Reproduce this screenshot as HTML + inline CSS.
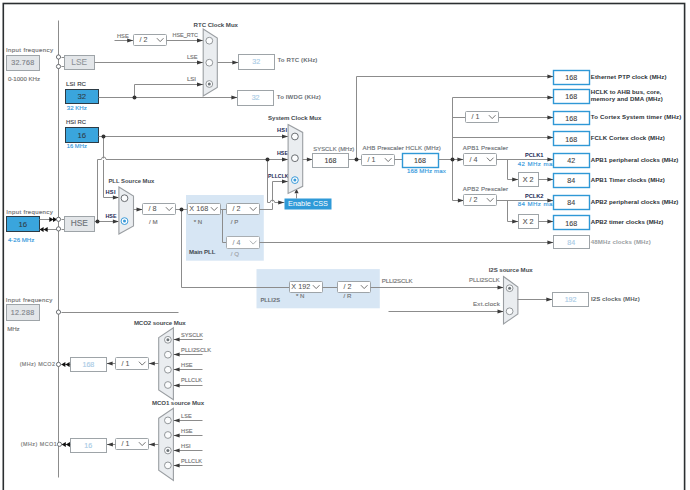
<!DOCTYPE html><html><head><meta charset="utf-8"><style>html,body{margin:0;padding:0;background:#fff;overflow:hidden}svg{display:block}text{font-family:"Liberation Sans",sans-serif}</style></head><body>
<svg width="690" height="490" viewBox="0 0 690 490">
<rect x="0" y="0" width="690" height="490" fill="#fff"/>
<rect x="186" y="195" width="77.8" height="65.7" fill="#d7e6f4"/>
<rect x="256.5" y="269.1" width="123.3" height="39.2" fill="#d7e6f4"/>
<polyline points="58.5,20.5 58.5,477.5" fill="none" stroke="#8c8c8c" stroke-width="1.0"/>
<text x="6" y="52.45" font-size="6.1" fill="#727272" stroke="#727272" stroke-width="0.15" textLength="47" lengthAdjust="spacing">Input frequency</text>
<rect x="6.5" y="55.5" width="33.00" height="15.00" fill="#e3e6e9" stroke="#9ea4a8" stroke-width="1.0"/>
<text x="22.7" y="65.27" font-size="7.1" fill="#7f8489" stroke="#7f8489" stroke-width="0.15" text-anchor="middle" textLength="23" lengthAdjust="spacing">32.768</text>
<text x="8" y="80.95" font-size="6.1" fill="#727272" stroke="#727272" stroke-width="0.15" textLength="32" lengthAdjust="spacing">0-1000 KHz</text>
<polyline points="61.5,57.5 64.5,57.5" fill="none" stroke="#8c8c8c" stroke-width="1.0"/>
<polyline points="61.5,66.5 64.5,66.5" fill="none" stroke="#8c8c8c" stroke-width="1.0"/>
<circle cx="58.5" cy="57" r="2.1" fill="#fff" stroke="#5d6165" stroke-width="0.9"/>
<circle cx="58.5" cy="66.5" r="2.1" fill="#fff" stroke="#5d6165" stroke-width="0.9"/>
<rect x="64.5" y="55.5" width="30.00" height="14.00" fill="#e3e6e9" stroke="#9ea4a8" stroke-width="1.0"/>
<text x="79.2" y="64.89" font-size="8.4" fill="#8c9196" stroke="#8c9196" stroke-width="0.05" text-anchor="middle">LSE</text>
<polyline points="94.5,62.5 203.5,62.5" fill="none" stroke="#8c8c8c" stroke-width="1.0"/>
<polygon points="203.00,62.50 197.00,60.40 197.00,64.60" fill="#3a3a3a"/>
<text x="187" y="58.95" font-size="6.1" fill="#727272" stroke="#727272" stroke-width="0.15" textLength="10.6" lengthAdjust="spacingAndGlyphs">LSE</text>
<text x="117" y="37.95" font-size="6.1" fill="#727272" stroke="#727272" stroke-width="0.15" textLength="11.7" lengthAdjust="spacingAndGlyphs">HSE</text>
<polyline points="114.5,40.5 133.5,40.5" fill="none" stroke="#8c8c8c" stroke-width="1.0"/>
<polygon points="133.20,40.50 127.20,38.40 127.20,42.60" fill="#3a3a3a"/>
<rect x="133.5" y="34.5" width="33.00" height="11.00" rx="1" fill="#fff" stroke="#9ea4a8" stroke-width="1"/>
<text x="139.5" y="42.30" font-size="7.2" fill="#555" stroke="#555" stroke-width="0.05">/ 2</text>
<polyline points="156.90,38.20 160.20,41.60 163.50,38.20" fill="none" stroke="#666" stroke-width="0.9"/>
<text x="172.5" y="37.35" font-size="6.1" fill="#727272" stroke="#727272" stroke-width="0.15" textLength="25.5" lengthAdjust="spacingAndGlyphs">HSE_RTC</text>
<polyline points="166.5,40.5 203.5,40.5" fill="none" stroke="#8c8c8c" stroke-width="1.0"/>
<polygon points="203.00,40.50 197.00,38.40 197.00,42.60" fill="#3a3a3a"/>
<text x="193.6" y="26.55" font-size="6.1" fill="#464b50" font-weight="bold" textLength="44.4" lengthAdjust="spacing">RTC Clock Mux</text>
<polygon points="203.2,29 217.3,38 217.3,87.4 203.2,96" fill="#eaedf0" stroke="#9a9ea2" stroke-width="1.1"/>
<circle cx="209.3" cy="40.7" r="3.4" fill="#fbfcfd" stroke="#8d9195" stroke-width="0.95"/>
<circle cx="209.3" cy="62.7" r="3.4" fill="#fbfcfd" stroke="#8d9195" stroke-width="0.95"/>
<circle cx="209.3" cy="84" r="3.4" fill="#fbfcfd" stroke="#8d9195" stroke-width="0.95"/>
<circle cx="209.3" cy="84" r="1.5" fill="#6d7478"/>
<polyline points="217.5,62.5 238.5,62.5" fill="none" stroke="#8c8c8c" stroke-width="1.0"/>
<polygon points="238.30,62.50 232.30,60.40 232.30,64.60" fill="#3a3a3a"/>
<rect x="238.5" y="54.5" width="36.00" height="15.00" fill="#fff" stroke="#9ea4a8" stroke-width="1.0"/>
<text x="256.3" y="64.47" font-size="7.1" fill="#a9cbe6" stroke="#a9cbe6" stroke-width="0.15" text-anchor="middle">32</text>
<text x="277.4" y="62.25" font-size="6.1" fill="#6b7075" font-weight="bold" textLength="40" lengthAdjust="spacing">To RTC (KHz)</text>
<text x="66" y="85.55" font-size="6.1" fill="#3c4147" stroke="#3c4147" stroke-width="0.15" textLength="20" lengthAdjust="spacing">LSI RC</text>
<rect x="65.5" y="89.5" width="33.00" height="14.00" fill="#3aa5dd" stroke="#2c3b45" stroke-width="1"/>
<text x="81.8" y="99.00" font-size="7.8" fill="#2f3c47" stroke="#2f3c47" stroke-width="0.08" text-anchor="middle">32</text>
<text x="66.8" y="110.15" font-size="6.1" fill="#3399dd" stroke="#3399dd" stroke-width="0.15" textLength="20" lengthAdjust="spacing">32 KHz</text>
<polyline points="98.5,97.5 237.5,97.5" fill="none" stroke="#8c8c8c" stroke-width="1.0"/>
<polygon points="237.40,97.50 231.40,95.40 231.40,99.60" fill="#3a3a3a"/>
<polyline points="134.5,97.5 134.5,84.5 203.5,84.5" fill="none" stroke="#8c8c8c" stroke-width="1.0"/>
<polygon points="203.00,84.50 197.00,82.40 197.00,86.60" fill="#3a3a3a"/>
<text x="187" y="80.95" font-size="6.1" fill="#727272" stroke="#727272" stroke-width="0.15" textLength="9" lengthAdjust="spacing">LSI</text>
<rect x="237.5" y="90.5" width="36.00" height="15.00" fill="#fff" stroke="#9ea4a8" stroke-width="1.0"/>
<text x="255.6" y="100.27" font-size="7.1" fill="#a9cbe6" stroke="#a9cbe6" stroke-width="0.15" text-anchor="middle">32</text>
<text x="276.8" y="99.15" font-size="6.1" fill="#6b7075" font-weight="bold" textLength="44" lengthAdjust="spacing">To IWDG (KHz)</text>
<text x="66" y="123.55" font-size="6.1" fill="#3c4147" stroke="#3c4147" stroke-width="0.15" textLength="20" lengthAdjust="spacingAndGlyphs">HSI RC</text>
<rect x="65.5" y="127.5" width="33.00" height="15.00" fill="#3aa5dd" stroke="#2c3b45" stroke-width="1"/>
<text x="81.8" y="137.50" font-size="7.8" fill="#2f3c47" stroke="#2f3c47" stroke-width="0.08" text-anchor="middle">16</text>
<text x="66.8" y="148.15" font-size="6.1" fill="#3399dd" stroke="#3399dd" stroke-width="0.15" textLength="20" lengthAdjust="spacingAndGlyphs">16 MHz</text>
<polyline points="98.5,136.5 288.5,136.5" fill="none" stroke="#8c8c8c" stroke-width="1.0"/>
<polygon points="288.00,136.50 282.00,134.40 282.00,138.60" fill="#3a3a3a"/>
<polyline points="103.5,136.5 103.5,197.5 118.5,197.5" fill="none" stroke="#8c8c8c" stroke-width="1.0"/>
<polygon points="118.90,197.50 112.90,195.40 112.90,199.60" fill="#3a3a3a"/>
<text x="6.3" y="213.65" font-size="6.1" fill="#727272" stroke="#727272" stroke-width="0.15" textLength="46.4" lengthAdjust="spacing">Input frequency</text>
<rect x="6.5" y="216.5" width="33.00" height="15.00" fill="#3aa5dd" stroke="#2c3b45" stroke-width="1.0"/>
<text x="22.8" y="226.80" font-size="7.8" fill="#2f3c47" stroke="#2f3c47" stroke-width="0.08" text-anchor="middle">16</text>
<text x="7.9" y="242.35" font-size="6.1" fill="#3399dd" stroke="#3399dd" stroke-width="0.15" textLength="26.4" lengthAdjust="spacing">4-26 MHz</text>
<polyline points="39.5,219.5 56.5,219.5" fill="none" stroke="#8c8c8c" stroke-width="1.0"/>
<polygon points="57.20,219.50 53.00,216.90 53.00,222.10" fill="#111"/>
<polygon points="53.50,219.50 49.30,216.90 49.30,222.10" fill="#111"/>
<polyline points="39.5,229.5 56.5,229.5" fill="none" stroke="#8c8c8c" stroke-width="1.0"/>
<polygon points="39.40,229.50 43.60,226.90 43.60,232.10" fill="#111"/>
<polygon points="43.50,229.50 47.70,226.90 47.70,232.10" fill="#111"/>
<polyline points="61.5,219.5 64.5,219.5" fill="none" stroke="#8c8c8c" stroke-width="1.0"/>
<polyline points="61.5,229.5 64.5,229.5" fill="none" stroke="#8c8c8c" stroke-width="1.0"/>
<circle cx="58.5" cy="219.3" r="2.1" fill="#fff" stroke="#5d6165" stroke-width="0.9"/>
<circle cx="58.5" cy="228.9" r="2.1" fill="#fff" stroke="#5d6165" stroke-width="0.9"/>
<rect x="64.5" y="216.5" width="30.00" height="15.00" fill="#e3e6e9" stroke="#9ea4a8" stroke-width="1.0"/>
<text x="79.3" y="226.49" font-size="8.4" fill="#6a6f74" stroke="#6a6f74" stroke-width="0.1" text-anchor="middle">HSE</text>
<polyline points="94.5,221.5 118.5,221.5" fill="none" stroke="#8c8c8c" stroke-width="1.0"/>
<polygon points="118.90,221.50 112.90,219.40 112.90,223.60" fill="#3a3a3a"/>
<polyline points="97.5,221.5 97.5,159.5 288.5,159.5" fill="none" stroke="#8c8c8c" stroke-width="1.0"/>
<polygon points="288.00,159.50 282.00,157.40 282.00,161.60" fill="#3a3a3a"/>
<rect x="101.5" y="158.39999999999998" width="4.4" height="1.6" fill="#fff"/>
<path d="M101.5,159.2 A2.2,2.2 0 0 1 105.9,159.2" fill="none" stroke="#8c8c8c" stroke-width="1"/>
<text x="108.4" y="182.95" font-size="6.1" fill="#464b50" font-weight="bold" textLength="46" lengthAdjust="spacingAndGlyphs">PLL Source Mux</text>
<text x="105.5" y="193.62" font-size="5.7" fill="#1d2a55" font-weight="bold" textLength="10" lengthAdjust="spacing">HSI</text>
<text x="105.5" y="217.72" font-size="5.7" fill="#1d2a55" font-weight="bold" textLength="11" lengthAdjust="spacingAndGlyphs">HSE</text>
<polygon points="118.9,187 133.5,196 133.5,226 118.9,234" fill="#eaedf0" stroke="#9a9ea2" stroke-width="1.1"/>
<circle cx="124.5" cy="198.2" r="3.4" fill="#fbfcfd" stroke="#62666a" stroke-width="0.95"/>
<circle cx="124.5" cy="221.1" r="3.4" fill="#fff" stroke="#3a9ad9" stroke-width="1"/>
<circle cx="124.5" cy="221.1" r="1.5" fill="#3a9ad9"/>
<polyline points="133.5,209.5 142.5,209.5" fill="none" stroke="#8c8c8c" stroke-width="1.0"/>
<polygon points="142.50,209.50 136.50,207.40 136.50,211.60" fill="#3a3a3a"/>
<rect x="142.5" y="203.5" width="33.00" height="11.00" rx="1" fill="#fff" stroke="#9ea4a8" stroke-width="1"/>
<text x="148.5" y="211.30" font-size="7.2" fill="#555" stroke="#555" stroke-width="0.05">/ 8</text>
<polyline points="165.90,207.20 169.20,210.60 172.50,207.20" fill="none" stroke="#666" stroke-width="0.9"/>
<text x="149" y="223.65" font-size="6.1" fill="#727272" stroke="#727272" stroke-width="0.15">/ M</text>
<polyline points="175.5,209.5 187.5,209.5" fill="none" stroke="#8c8c8c" stroke-width="1.0"/>
<polyline points="181.5,209.5 181.5,287.5 289.5,287.5" fill="none" stroke="#8c8c8c" stroke-width="1.0"/>
<rect x="187.5" y="203.5" width="33.00" height="11.00" rx="1" fill="#fff" stroke="#9ea4a8" stroke-width="1"/>
<text x="189.3" y="211.30" font-size="7.2" fill="#555" stroke="#555" stroke-width="0.05" textLength="19" lengthAdjust="spacing">X 168</text>
<polyline points="210.90,207.20 214.20,210.60 217.50,207.20" fill="none" stroke="#666" stroke-width="0.9"/>
<text x="193.7" y="223.65" font-size="6.1" fill="#727272" stroke="#727272" stroke-width="0.15">* N</text>
<polyline points="220.5,209.5 226.5,209.5" fill="none" stroke="#8c8c8c" stroke-width="1.0"/>
<polyline points="222.5,209.5 222.5,242.5 226.5,242.5" fill="none" stroke="#8c8c8c" stroke-width="1.0"/>
<rect x="226.5" y="203.5" width="33.00" height="11.00" rx="1" fill="#fff" stroke="#9ea4a8" stroke-width="1"/>
<text x="232.5" y="211.30" font-size="7.2" fill="#555" stroke="#555" stroke-width="0.05">/ 2</text>
<polyline points="249.90,207.20 253.20,210.60 256.50,207.20" fill="none" stroke="#666" stroke-width="0.9"/>
<text x="230.8" y="223.65" font-size="6.1" fill="#727272" stroke="#727272" stroke-width="0.15">/ P</text>
<rect x="226.5" y="236.5" width="33.00" height="12.00" rx="1" fill="#fff" stroke="#a9aeb2" stroke-width="1"/>
<text x="232.5" y="244.80" font-size="7.2" fill="#858a8f" stroke="#858a8f" stroke-width="0.05">/ 4</text>
<polyline points="249.90,240.70 253.20,244.10 256.50,240.70" fill="none" stroke="#a4a8ac" stroke-width="0.9"/>
<text x="230.8" y="255.65" font-size="6.1" fill="#a0a4a8" stroke="#a0a4a8" stroke-width="0.15">/ Q</text>
<text x="188.9" y="253.85" font-size="6.1" fill="#444a50" font-weight="bold" textLength="26.6" lengthAdjust="spacing">Main PLL</text>
<polyline points="259.5,242.5 553.5,242.5" fill="none" stroke="#8c8c8c" stroke-width="1.0"/>
<polygon points="553.40,242.50 547.40,240.40 547.40,244.60" fill="#3a3a3a"/>
<polyline points="259.5,209.5 272.5,209.5 272.5,181.5 288.5,181.5" fill="none" stroke="#8c8c8c" stroke-width="1.0"/>
<polygon points="288.00,181.50 282.00,179.40 282.00,183.60" fill="#3a3a3a"/>
<text x="268" y="177.52" font-size="5.7" fill="#1d2a55" font-weight="bold" textLength="20.6" lengthAdjust="spacingAndGlyphs">PLLCLK</text>
<polyline points="267.5,159.5 267.5,202.5 284.5,202.5" fill="none" stroke="#8c8c8c" stroke-width="1.0"/>
<polygon points="284.20,202.50 278.20,200.40 278.20,204.60" fill="#3a3a3a"/>
<rect x="270.2" y="201.5" width="4.4" height="1.6" fill="#fff"/>
<path d="M270.2,202.3 A2.2,2.2 0 0 1 274.59999999999997,202.3" fill="none" stroke="#8c8c8c" stroke-width="1"/>
<rect x="284.5" y="198.5" width="47.00" height="11.00" fill="#2f9ad8" stroke="none" stroke-width="0"/>
<text x="308" y="206.40" font-size="7.8" fill="#fff" text-anchor="middle" textLength="39.9" lengthAdjust="spacingAndGlyphs">Enable CSS</text>
<polyline points="296.5,198.5 296.5,193.5" fill="none" stroke="#8c8c8c" stroke-width="1.0"/>
<polygon points="296.50,188.80 294.40,193.30 298.60,193.30" fill="#3a3a3a"/>
<text x="268" y="120.45" font-size="6.1" fill="#464b50" font-weight="bold" textLength="53.3" lengthAdjust="spacing">System Clock Mux</text>
<text x="277" y="132.02" font-size="5.7" fill="#1d2a55" font-weight="bold" textLength="10" lengthAdjust="spacing">HSI</text>
<text x="277" y="154.82" font-size="5.7" fill="#1d2a55" font-weight="bold" textLength="11" lengthAdjust="spacingAndGlyphs">HSE</text>
<polygon points="288.1,124.6 302.7,132.4 302.7,186.3 288.1,193.4" fill="#eaedf0" stroke="#9a9ea2" stroke-width="1.1"/>
<circle cx="294.9" cy="136.5" r="3.4" fill="#fbfcfd" stroke="#62666a" stroke-width="0.95"/>
<circle cx="294.9" cy="158.2" r="3.4" fill="#fbfcfd" stroke="#62666a" stroke-width="0.95"/>
<circle cx="294.9" cy="180.1" r="3.4" fill="#fff" stroke="#3a9ad9" stroke-width="1"/>
<circle cx="294.9" cy="180.1" r="1.5" fill="#3a9ad9"/>
<polyline points="302.5,159.5 312.5,159.5" fill="none" stroke="#8c8c8c" stroke-width="1.0"/>
<polygon points="312.40,159.50 306.90,157.50 306.90,161.50" fill="#3a3a3a"/>
<rect x="312.5" y="153.5" width="36.00" height="14.00" fill="#fff" stroke="#9ea4a8" stroke-width="1.0"/>
<text x="330.5" y="162.77" font-size="7.1" fill="#3e3e3e" stroke="#3e3e3e" stroke-width="0.1" text-anchor="middle">168</text>
<text x="313.3" y="150.55" font-size="6.1" fill="#6d7277" stroke="#6d7277" stroke-width="0.15" textLength="41" lengthAdjust="spacingAndGlyphs">SYSCLK (MHz)</text>
<polyline points="348.5,159.5 361.5,159.5" fill="none" stroke="#8c8c8c" stroke-width="1.0"/>
<polyline points="356.5,159.5 356.5,76.5 553.5,76.5" fill="none" stroke="#8c8c8c" stroke-width="1.0"/>
<polygon points="553.40,76.50 547.40,74.40 547.40,78.60" fill="#3a3a3a"/>
<text x="362.6" y="149.95" font-size="6.1" fill="#6d7277" stroke="#6d7277" stroke-width="0.15" textLength="78.3" lengthAdjust="spacing">AHB Prescaler HCLK (MHz)</text>
<rect x="361.5" y="154.5" width="33.00" height="11.00" rx="1" fill="#fff" stroke="#9ea4a8" stroke-width="1"/>
<text x="367.5" y="162.30" font-size="7.2" fill="#555" stroke="#555" stroke-width="0.05">/ 1</text>
<polyline points="384.90,158.20 388.20,161.60 391.50,158.20" fill="none" stroke="#666" stroke-width="0.9"/>
<polyline points="394.5,159.5 402.5,159.5" fill="none" stroke="#8c8c8c" stroke-width="1.0"/>
<rect x="402.5" y="153.5" width="36.00" height="14.00" fill="#fff" stroke="#2f98d6" stroke-width="1.4"/>
<text x="420" y="162.57" font-size="7.1" fill="#3e3e3e" stroke="#3e3e3e" stroke-width="0.1" text-anchor="middle">168</text>
<text x="407" y="172.55" font-size="6.1" fill="#3399dd" stroke="#3399dd" stroke-width="0.15" textLength="38.7" lengthAdjust="spacing">168 MHz max</text>
<polyline points="438.5,159.5 463.5,159.5" fill="none" stroke="#8c8c8c" stroke-width="1.0"/>
<polygon points="463.40,159.50 457.40,157.40 457.40,161.60" fill="#3a3a3a"/>
<polyline points="452.5,97.5 452.5,200.5 463.5,200.5" fill="none" stroke="#8c8c8c" stroke-width="1.0"/>
<polygon points="463.90,200.50 457.90,198.40 457.90,202.60" fill="#3a3a3a"/>
<polyline points="452.5,97.5 553.5,97.5" fill="none" stroke="#8c8c8c" stroke-width="1.0"/>
<polygon points="553.40,97.50 547.40,95.40 547.40,99.60" fill="#3a3a3a"/>
<polyline points="452.5,117.5 553.5,117.5" fill="none" stroke="#8c8c8c" stroke-width="1.0"/>
<polygon points="553.40,117.50 547.40,115.40 547.40,119.60" fill="#3a3a3a"/>
<rect x="465.5" y="111.5" width="33.00" height="11.00" rx="1" fill="#fff" stroke="#9ea4a8" stroke-width="1"/>
<text x="471.5" y="119.30" font-size="7.2" fill="#555" stroke="#555" stroke-width="0.05">/ 1</text>
<polyline points="488.90,115.20 492.20,118.60 495.50,115.20" fill="none" stroke="#666" stroke-width="0.9"/>
<polyline points="452.5,137.5 553.5,137.5" fill="none" stroke="#8c8c8c" stroke-width="1.0"/>
<polygon points="553.40,137.50 547.40,135.40 547.40,139.60" fill="#3a3a3a"/>
<text x="462.8" y="149.95" font-size="6.1" fill="#6d7277" stroke="#6d7277" stroke-width="0.15" textLength="45.2" lengthAdjust="spacing">APB1 Prescaler</text>
<rect x="463.5" y="153.5" width="33.00" height="12.00" rx="1" fill="#fff" stroke="#9ea4a8" stroke-width="1"/>
<text x="469.5" y="161.80" font-size="7.2" fill="#555" stroke="#555" stroke-width="0.05">/ 4</text>
<polyline points="486.90,157.70 490.20,161.10 493.50,157.70" fill="none" stroke="#666" stroke-width="0.9"/>
<polyline points="496.5,159.5 553.5,159.5" fill="none" stroke="#8c8c8c" stroke-width="1.0"/>
<polygon points="553.40,159.50 547.40,157.40 547.40,161.60" fill="#3a3a3a"/>
<polyline points="507.5,159.5 507.5,179.5 518.5,179.5" fill="none" stroke="#8c8c8c" stroke-width="1.0"/>
<polygon points="518.20,179.50 512.20,177.40 512.20,181.60" fill="#3a3a3a"/>
<text x="525" y="156.62" font-size="5.7" fill="#1d2a55" font-weight="bold" textLength="18.5" lengthAdjust="spacing">PCLK1</text>
<text x="517.8" y="166.05" font-size="6.1" fill="#3399dd" stroke="#3399dd" stroke-width="0.15" textLength="38" lengthAdjust="spacing">42 MHz max</text>
<rect x="518.5" y="172.5" width="20.00" height="14.00" fill="#fff" stroke="#9ea4a8" stroke-width="1.0"/>
<text x="528.1" y="181.80" font-size="7.2" fill="#555" stroke="#555" stroke-width="0.15" text-anchor="middle" textLength="10.7" lengthAdjust="spacing">X 2</text>
<polyline points="538.5,179.5 553.5,179.5" fill="none" stroke="#8c8c8c" stroke-width="1.0"/>
<polygon points="553.40,179.50 547.40,177.40 547.40,181.60" fill="#3a3a3a"/>
<text x="462.8" y="191.15" font-size="6.1" fill="#6d7277" stroke="#6d7277" stroke-width="0.15" textLength="45.2" lengthAdjust="spacing">APB2 Prescaler</text>
<rect x="463.5" y="194.5" width="33.00" height="11.00" rx="1" fill="#fff" stroke="#9ea4a8" stroke-width="1"/>
<text x="469.5" y="202.30" font-size="7.2" fill="#555" stroke="#555" stroke-width="0.05">/ 2</text>
<polyline points="486.90,198.20 490.20,201.60 493.50,198.20" fill="none" stroke="#666" stroke-width="0.9"/>
<polyline points="496.5,200.5 553.5,200.5" fill="none" stroke="#8c8c8c" stroke-width="1.0"/>
<polygon points="553.40,200.50 547.40,198.40 547.40,202.60" fill="#3a3a3a"/>
<polyline points="507.5,200.5 507.5,221.5 518.5,221.5" fill="none" stroke="#8c8c8c" stroke-width="1.0"/>
<polygon points="518.20,221.50 512.20,219.40 512.20,223.60" fill="#3a3a3a"/>
<text x="525" y="198.12" font-size="5.7" fill="#1d2a55" font-weight="bold" textLength="18.5" lengthAdjust="spacing">PCLK2</text>
<text x="517.8" y="206.45" font-size="6.1" fill="#3399dd" stroke="#3399dd" stroke-width="0.15" textLength="38" lengthAdjust="spacing">84 MHz max</text>
<rect x="518.5" y="214.5" width="20.00" height="14.00" fill="#fff" stroke="#9ea4a8" stroke-width="1.0"/>
<text x="528.1" y="223.90" font-size="7.2" fill="#555" stroke="#555" stroke-width="0.15" text-anchor="middle" textLength="10.7" lengthAdjust="spacing">X 2</text>
<polyline points="538.5,221.5 553.5,221.5" fill="none" stroke="#8c8c8c" stroke-width="1.0"/>
<polygon points="553.40,221.50 547.40,219.40 547.40,223.60" fill="#3a3a3a"/>
<rect x="553.5" y="70.5" width="36.00" height="14.00" fill="#fff" stroke="#2f98d6" stroke-width="1.4"/>
<text x="571.2" y="79.92" font-size="7.1" fill="#3e3e3e" stroke="#3e3e3e" stroke-width="0.1" text-anchor="middle">168</text>
<text x="590.8" y="78.50" font-size="6.1" fill="#2c3136" font-weight="bold" textLength="75.7" lengthAdjust="spacing">Ethernet PTP clock (MHz)</text>
<rect x="553.5" y="89.5" width="36.00" height="14.00" fill="#fff" stroke="#2f98d6" stroke-width="1.4"/>
<text x="571.2" y="98.97" font-size="7.1" fill="#3e3e3e" stroke="#3e3e3e" stroke-width="0.1" text-anchor="middle">168</text>
<text x="590.8" y="93.95" font-size="6.1" fill="#2c3136" font-weight="bold" textLength="70.5" lengthAdjust="spacing">HCLK to AHB bus, core,</text>
<text x="590.8" y="100.85" font-size="6.1" fill="#2c3136" font-weight="bold" textLength="72" lengthAdjust="spacing">memory and DMA (MHz)</text>
<rect x="553.5" y="111.5" width="36.00" height="13.00" fill="#fff" stroke="#2f98d6" stroke-width="1.4"/>
<text x="571.2" y="120.62" font-size="7.1" fill="#3e3e3e" stroke="#3e3e3e" stroke-width="0.1" text-anchor="middle">168</text>
<text x="590.8" y="119.20" font-size="6.1" fill="#2c3136" font-weight="bold" textLength="90.4" lengthAdjust="spacing">To Cortex System timer (MHz)</text>
<rect x="553.5" y="131.5" width="36.00" height="14.00" fill="#fff" stroke="#2f98d6" stroke-width="1.4"/>
<text x="571.2" y="141.57" font-size="7.1" fill="#3e3e3e" stroke="#3e3e3e" stroke-width="0.1" text-anchor="middle">168</text>
<text x="590.8" y="140.15" font-size="6.1" fill="#2c3136" font-weight="bold" textLength="74" lengthAdjust="spacing">FCLK Cortex clock (MHz)</text>
<rect x="553.5" y="153.5" width="36.00" height="14.00" fill="#fff" stroke="#2f98d6" stroke-width="1.4"/>
<text x="571.2" y="163.07" font-size="7.1" fill="#3e3e3e" stroke="#3e3e3e" stroke-width="0.1" text-anchor="middle">42</text>
<text x="590.8" y="161.65" font-size="6.1" fill="#2c3136" font-weight="bold" textLength="87.6" lengthAdjust="spacing">APB1 peripheral clocks (MHz)</text>
<rect x="553.5" y="173.5" width="36.00" height="14.00" fill="#fff" stroke="#2f98d6" stroke-width="1.4"/>
<text x="571.2" y="183.02" font-size="7.1" fill="#3e3e3e" stroke="#3e3e3e" stroke-width="0.1" text-anchor="middle">84</text>
<text x="590.8" y="181.60" font-size="6.1" fill="#2c3136" font-weight="bold" textLength="74" lengthAdjust="spacing">APB1 Timer clocks (MHz)</text>
<rect x="553.5" y="195.5" width="36.00" height="14.00" fill="#fff" stroke="#2f98d6" stroke-width="1.4"/>
<text x="571.2" y="205.02" font-size="7.1" fill="#3e3e3e" stroke="#3e3e3e" stroke-width="0.1" text-anchor="middle">84</text>
<text x="590.8" y="203.60" font-size="6.1" fill="#2c3136" font-weight="bold" textLength="87.6" lengthAdjust="spacing">APB2 peripheral clocks (MHz)</text>
<rect x="553.5" y="215.5" width="36.00" height="14.00" fill="#fff" stroke="#2f98d6" stroke-width="1.4"/>
<text x="571.2" y="225.57" font-size="7.1" fill="#3e3e3e" stroke="#3e3e3e" stroke-width="0.1" text-anchor="middle">168</text>
<text x="590.8" y="224.15" font-size="6.1" fill="#2c3136" font-weight="bold" textLength="72.5" lengthAdjust="spacing">APB2 timer clocks (MHz)</text>
<rect x="553.5" y="235.5" width="36.00" height="13.00" fill="#fff" stroke="#9ea4a8" stroke-width="1.0"/>
<text x="571.2" y="244.77" font-size="7.1" fill="#a9cbe6" stroke="#a9cbe6" stroke-width="0.15" text-anchor="middle">84</text>
<text x="590.8" y="243.75" font-size="6.1" fill="#9a9ea2" font-weight="bold" textLength="60" lengthAdjust="spacing">48MHz clocks (MHz)</text>
<rect x="289.5" y="281.5" width="33.00" height="11.00" rx="1" fill="#fff" stroke="#9ea4a8" stroke-width="1"/>
<text x="291.3" y="289.30" font-size="7.2" fill="#555" stroke="#555" stroke-width="0.05" textLength="19" lengthAdjust="spacing">X 192</text>
<polyline points="312.90,285.20 316.20,288.60 319.50,285.20" fill="none" stroke="#666" stroke-width="0.9"/>
<text x="296" y="297.85" font-size="6.1" fill="#727272" stroke="#727272" stroke-width="0.15">* N</text>
<polyline points="322.5,287.5 337.5,287.5" fill="none" stroke="#8c8c8c" stroke-width="1.0"/>
<rect x="337.5" y="281.5" width="33.00" height="11.00" rx="1" fill="#fff" stroke="#9ea4a8" stroke-width="1"/>
<text x="343.5" y="289.30" font-size="7.2" fill="#555" stroke="#555" stroke-width="0.05">/ 2</text>
<polyline points="360.90,285.20 364.20,288.60 367.50,285.20" fill="none" stroke="#666" stroke-width="0.9"/>
<text x="343.5" y="297.85" font-size="6.1" fill="#727272" stroke="#727272" stroke-width="0.15">/ R</text>
<text x="260.4" y="301.55" font-size="6.1" fill="#6a6f74" font-weight="bold" textLength="19.6" lengthAdjust="spacingAndGlyphs">PLLI2S</text>
<polyline points="370.5,287.5 503.5,287.5" fill="none" stroke="#8c8c8c" stroke-width="1.0"/>
<polygon points="503.50,287.50 497.50,285.40 497.50,289.60" fill="#3a3a3a"/>
<text x="381.7" y="282.65" font-size="6.1" fill="#727272" stroke="#727272" stroke-width="0.15" textLength="31" lengthAdjust="spacing">PLLI2SCLK</text>
<text x="488.7" y="272.05" font-size="6.1" fill="#464b50" font-weight="bold" textLength="44" lengthAdjust="spacing">I2S source Mux</text>
<text x="469" y="282.45" font-size="6.1" fill="#727272" stroke="#727272" stroke-width="0.15" textLength="30.7" lengthAdjust="spacingAndGlyphs">PLLI2SCLK</text>
<text x="473" y="306.25" font-size="6.1" fill="#727272" stroke="#727272" stroke-width="0.15" textLength="26.7" lengthAdjust="spacing">Ext.clock</text>
<polyline points="388.5,311.5 503.5,311.5" fill="none" stroke="#8c8c8c" stroke-width="1.0"/>
<polygon points="503.50,311.50 497.50,309.40 497.50,313.60" fill="#3a3a3a"/>
<polygon points="503.5,276.5 517.9,287 517.9,313.9 503.5,324" fill="#eaedf0" stroke="#9a9ea2" stroke-width="1.1"/>
<circle cx="509.6" cy="288.2" r="3.4" fill="#fbfcfd" stroke="#8d9195" stroke-width="0.95"/>
<circle cx="509.6" cy="288.2" r="1.5" fill="#6d7478"/>
<circle cx="509.6" cy="311.3" r="3.4" fill="#fbfcfd" stroke="#8d9195" stroke-width="0.95"/>
<polyline points="517.5,299.5 552.5,299.5" fill="none" stroke="#8c8c8c" stroke-width="1.0"/>
<polygon points="552.30,299.50 546.30,297.40 546.30,301.60" fill="#3a3a3a"/>
<rect x="552.5" y="292.5" width="36.00" height="14.00" fill="#fff" stroke="#9ea4a8" stroke-width="1.0"/>
<text x="570.6" y="302.17" font-size="7.1" fill="#a9cbe6" stroke="#a9cbe6" stroke-width="0.15" text-anchor="middle">192</text>
<text x="591" y="300.55" font-size="6.1" fill="#5a5f64" font-weight="bold" textLength="48.7" lengthAdjust="spacing">I2S clocks (MHz)</text>
<text x="5.7" y="301.95" font-size="6.1" fill="#727272" stroke="#727272" stroke-width="0.15" textLength="46.5" lengthAdjust="spacing">Input frequency</text>
<rect x="6.5" y="304.5" width="33.00" height="16.00" fill="#e3e6e9" stroke="#9ea4a8" stroke-width="1.0"/>
<text x="22.4" y="315.17" font-size="7.1" fill="#7f8489" stroke="#7f8489" stroke-width="0.15" text-anchor="middle" textLength="23.5" lengthAdjust="spacing">12.288</text>
<text x="7.3" y="330.75" font-size="6.1" fill="#727272" stroke="#727272" stroke-width="0.15" textLength="12.3" lengthAdjust="spacing">MHz</text>
<polyline points="61.5,312.5 178.5,312.5" fill="none" stroke="#8c8c8c" stroke-width="1.0"/>
<circle cx="58.5" cy="312.1" r="2.1" fill="#fff" stroke="#5d6165" stroke-width="0.9"/>
<text x="133.9" y="324.85" font-size="6.1" fill="#464b50" font-weight="bold" textLength="51.8" lengthAdjust="spacing">MCO2 source Mux</text>
<polygon points="158.7,337.6 173.4,327.8 173.4,399.7 158.7,390" fill="#eaedf0" stroke="#9a9ea2" stroke-width="1.1"/>
<circle cx="167.9" cy="339.8" r="3.4" fill="#fbfcfd" stroke="#8d9195" stroke-width="0.95"/>
<circle cx="167.9" cy="339.8" r="1.5" fill="#6d7478"/>
<circle cx="167.9" cy="354.7" r="3.4" fill="#fbfcfd" stroke="#8d9195" stroke-width="0.95"/>
<circle cx="167.9" cy="369.7" r="3.4" fill="#fbfcfd" stroke="#8d9195" stroke-width="0.95"/>
<circle cx="167.9" cy="385" r="3.4" fill="#fbfcfd" stroke="#8d9195" stroke-width="0.95"/>
<polyline points="173.5,339.5 202.5,339.5" fill="none" stroke="#8c8c8c" stroke-width="1.0"/>
<polygon points="173.60,339.50 179.60,337.40 179.60,341.60" fill="#3a3a3a"/>
<text x="181.1" y="337.15" font-size="6.1" fill="#727272" stroke="#727272" stroke-width="0.15" textLength="22" lengthAdjust="spacingAndGlyphs">SYSCLK</text>
<polyline points="173.5,354.5 202.5,354.5" fill="none" stroke="#8c8c8c" stroke-width="1.0"/>
<polygon points="173.60,354.50 179.60,352.40 179.60,356.60" fill="#3a3a3a"/>
<text x="181.1" y="352.05" font-size="6.1" fill="#727272" stroke="#727272" stroke-width="0.15" textLength="30" lengthAdjust="spacingAndGlyphs">PLLI2SCLK</text>
<polyline points="173.5,369.5 202.5,369.5" fill="none" stroke="#8c8c8c" stroke-width="1.0"/>
<polygon points="173.60,369.50 179.60,367.40 179.60,371.60" fill="#3a3a3a"/>
<text x="181.1" y="367.05" font-size="6.1" fill="#727272" stroke="#727272" stroke-width="0.15" textLength="11.5" lengthAdjust="spacingAndGlyphs">HSE</text>
<polyline points="173.5,385.5 202.5,385.5" fill="none" stroke="#8c8c8c" stroke-width="1.0"/>
<polygon points="173.60,385.50 179.60,383.40 179.60,387.60" fill="#3a3a3a"/>
<text x="181.1" y="382.35" font-size="6.1" fill="#727272" stroke="#727272" stroke-width="0.15" textLength="21" lengthAdjust="spacingAndGlyphs">PLLCLK</text>
<polyline points="148.5,363.5 158.5,363.5" fill="none" stroke="#8c8c8c" stroke-width="1.0"/>
<polygon points="148.80,363.50 154.80,361.40 154.80,365.60" fill="#3a3a3a"/>
<rect x="115.5" y="357.5" width="33.00" height="12.00" rx="1" fill="#fff" stroke="#9ea4a8" stroke-width="1"/>
<text x="121.5" y="365.80" font-size="7.2" fill="#555" stroke="#555" stroke-width="0.05">/ 1</text>
<polyline points="138.90,361.70 142.20,365.10 145.50,361.70" fill="none" stroke="#666" stroke-width="0.9"/>
<polyline points="106.5,363.5 115.5,363.5" fill="none" stroke="#8c8c8c" stroke-width="1.0"/>
<polygon points="106.60,363.50 112.60,361.40 112.60,365.60" fill="#3a3a3a"/>
<rect x="70.5" y="357.5" width="36.00" height="14.00" fill="#fff" stroke="#9ea4a8" stroke-width="1.0"/>
<text x="88.4" y="367.27" font-size="7.1" fill="#a9cbe6" stroke="#a9cbe6" stroke-width="0.15" text-anchor="middle">168</text>
<polyline points="61.5,364.5 70.5,364.5" fill="none" stroke="#8c8c8c" stroke-width="1.0"/>
<polygon points="61.20,364.50 65.40,361.90 65.40,367.10" fill="#111"/>
<polygon points="65.40,364.50 69.60,361.90 69.60,367.10" fill="#111"/>
<circle cx="58.5" cy="364.4" r="2.1" fill="#fff" stroke="#5d6165" stroke-width="0.9"/>
<text x="19.7" y="365.93" font-size="5.4" fill="#7a7a7a" stroke="#7a7a7a" stroke-width="0.15" textLength="35.2" lengthAdjust="spacing">(MHz) MCO2</text>
<text x="151.9" y="405.25" font-size="6.1" fill="#464b50" font-weight="bold" textLength="52.2" lengthAdjust="spacing">MCO1 source Mux</text>
<polygon points="158.7,418.3 173.4,408.2 173.4,480.4 158.7,470.3" fill="#eaedf0" stroke="#9a9ea2" stroke-width="1.1"/>
<circle cx="167.9" cy="420.4" r="3.4" fill="#fbfcfd" stroke="#8d9195" stroke-width="0.95"/>
<circle cx="167.9" cy="435" r="3.4" fill="#fbfcfd" stroke="#8d9195" stroke-width="0.95"/>
<circle cx="167.9" cy="450.5" r="3.4" fill="#fbfcfd" stroke="#8d9195" stroke-width="0.95"/>
<circle cx="167.9" cy="450.5" r="1.5" fill="#6d7478"/>
<circle cx="167.9" cy="465.4" r="3.4" fill="#fbfcfd" stroke="#8d9195" stroke-width="0.95"/>
<polyline points="173.5,420.5 202.5,420.5" fill="none" stroke="#8c8c8c" stroke-width="1.0"/>
<polygon points="173.60,420.50 179.60,418.40 179.60,422.60" fill="#3a3a3a"/>
<text x="181.1" y="418.35" font-size="6.1" fill="#727272" stroke="#727272" stroke-width="0.15" textLength="10.5" lengthAdjust="spacingAndGlyphs">LSE</text>
<polyline points="173.5,435.5 202.5,435.5" fill="none" stroke="#8c8c8c" stroke-width="1.0"/>
<polygon points="173.60,435.50 179.60,433.40 179.60,437.60" fill="#3a3a3a"/>
<text x="181.1" y="432.95" font-size="6.1" fill="#727272" stroke="#727272" stroke-width="0.15" textLength="11.5" lengthAdjust="spacingAndGlyphs">HSE</text>
<polyline points="173.5,450.5 202.5,450.5" fill="none" stroke="#8c8c8c" stroke-width="1.0"/>
<polygon points="173.60,450.50 179.60,448.40 179.60,452.60" fill="#3a3a3a"/>
<text x="181.1" y="448.45" font-size="6.1" fill="#727272" stroke="#727272" stroke-width="0.15" textLength="9.5" lengthAdjust="spacingAndGlyphs">HSI</text>
<polyline points="173.5,465.5 202.5,465.5" fill="none" stroke="#8c8c8c" stroke-width="1.0"/>
<polygon points="173.60,465.50 179.60,463.40 179.60,467.60" fill="#3a3a3a"/>
<text x="181.1" y="463.35" font-size="6.1" fill="#727272" stroke="#727272" stroke-width="0.15" textLength="21" lengthAdjust="spacingAndGlyphs">PLLCLK</text>
<polyline points="148.5,444.5 158.5,444.5" fill="none" stroke="#8c8c8c" stroke-width="1.0"/>
<polygon points="148.80,444.50 154.80,442.40 154.80,446.60" fill="#3a3a3a"/>
<rect x="115.5" y="438.5" width="33.00" height="11.00" rx="1" fill="#fff" stroke="#9ea4a8" stroke-width="1"/>
<text x="121.5" y="446.30" font-size="7.2" fill="#555" stroke="#555" stroke-width="0.05">/ 1</text>
<polyline points="138.90,442.20 142.20,445.60 145.50,442.20" fill="none" stroke="#666" stroke-width="0.9"/>
<polyline points="106.5,444.5 115.5,444.5" fill="none" stroke="#8c8c8c" stroke-width="1.0"/>
<polygon points="106.90,444.50 112.90,442.40 112.90,446.60" fill="#3a3a3a"/>
<rect x="70.5" y="438.5" width="36.00" height="14.00" fill="#fff" stroke="#9ea4a8" stroke-width="1.0"/>
<text x="88.3" y="447.77" font-size="7.1" fill="#a9cbe6" stroke="#a9cbe6" stroke-width="0.15" text-anchor="middle">16</text>
<polyline points="61.5,444.5 70.5,444.5" fill="none" stroke="#8c8c8c" stroke-width="1.0"/>
<polygon points="61.60,444.50 65.80,441.90 65.80,447.10" fill="#111"/>
<polygon points="65.80,444.50 70.00,441.90 70.00,447.10" fill="#111"/>
<circle cx="59.5" cy="444.3" r="2.1" fill="#fff" stroke="#5d6165" stroke-width="0.9"/>
<text x="20.7" y="446.23" font-size="5.4" fill="#7a7a7a" stroke="#7a7a7a" stroke-width="0.15" textLength="36" lengthAdjust="spacing">(MHz) MCO1</text>
<circle cx="134.5" cy="97.5" r="2.0" fill="#333"/>
<circle cx="103.5" cy="136.5" r="2.0" fill="#333"/>
<circle cx="97.5" cy="221.5" r="2.0" fill="#333"/>
<circle cx="267.5" cy="159.5" r="2.0" fill="#333"/>
<circle cx="181.5" cy="209.5" r="2.0" fill="#333"/>
<circle cx="356.5" cy="159.5" r="2.0" fill="#333"/>
<circle cx="452.5" cy="159.5" r="2.0" fill="#333"/>
<rect x="3.3" y="3.5" width="681.3" height="520" fill="none" stroke="#2b2f31" stroke-width="1.6"/>
</svg></body></html>
